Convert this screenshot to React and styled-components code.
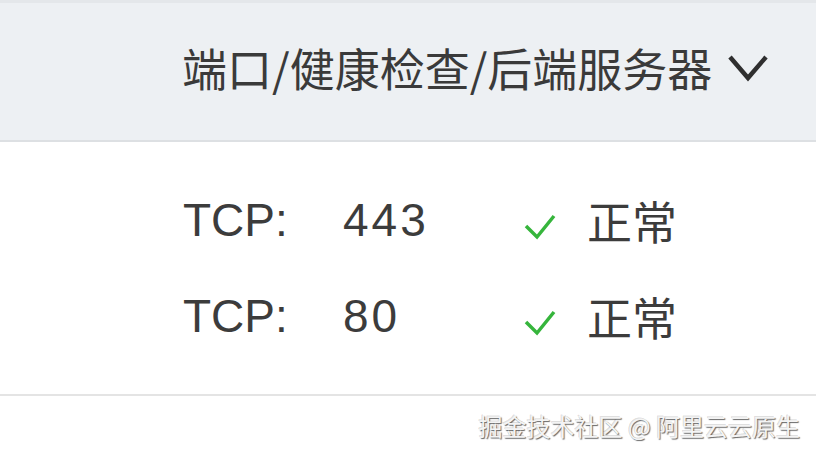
import React from 'react';
import styled, { createGlobalStyle } from 'styled-components';

const GlobalStyles = createGlobalStyle`
  html, body {
    margin: 0;
    padding: 0;
    background: #ffffff;
  }
  body {
    width: 816px;
    height: 456px;
    overflow: hidden;
    font-family: "Liberation Sans", "Noto Sans CJK SC", sans-serif;
    color: #333333;
  }
`;

const listeners = [
  { proto: 'TCP:', port: '443', status: '正常' },
  { proto: 'TCP:', port: '80', status: '正常' },
];

const App = () => (
  <>
    <GlobalStyles />
    <Page>
      <Header>
        <HeaderTitle>端口/健康检查/后端服务器</HeaderTitle>
        <Chevron viewBox="0 0 42 30">
          <path d="M3 4 L21 25 L39 4" />
        </Chevron>
      </Header>
      <Body>
        {listeners.map((item) => (
          <Row key={item.port}>
            <Cell>{item.proto}</Cell>
            <Port>{item.port}</Port>
            <Check viewBox="0 0 32 29">
              <path d="M2 14 L13 25 L30 4" />
            </Check>
            <Status>{item.status}</Status>
          </Row>
        ))}
      </Body>
      <Footer>
        <Watermark>掘金技术社区 @ 阿里云云原生</Watermark>
      </Footer>
    </Page>
  </>
);

export default App;

const Page = styled.div`
  display: flex;
  flex-direction: column;
  width: 816px;
  height: 456px;
`;

const Header = styled.div`
  display: flex;
  align-items: center;
  gap: 15px;
  height: 142px;
  padding: 0 0 8px 182px;
  box-sizing: border-box;
  background: #edf0f3;
  border-top: 3px solid #e4e7ea;
  border-bottom: 2px solid #dde0e3;
`;

const HeaderTitle = styled.span`
  font-family: "Noto Sans CJK SC", sans-serif;
  font-size: 45px;
  line-height: 1;
  color: #3a3a3a;
`;

const Chevron = styled.svg`
  width: 42px;
  height: 30px;
  fill: none;
  stroke: #2f2f2f;
  stroke-width: 4.5;
`;

const Body = styled.div`
  display: flex;
  flex-direction: column;
  padding: 30px 0 30px 183px;
  border-bottom: 2px solid #e4e4e4;
`;

const Row = styled.div`
  display: grid;
  grid-template-columns: 160px 181px 63px auto;
  align-items: center;
  height: 96px;
`;

const Cell = styled.span`
  font-size: 46px;
  line-height: 1;
  color: #3c3c3c;
`;

const Port = styled(Cell)`
  letter-spacing: 3px;
`;

const Check = styled.svg`
  width: 32px;
  height: 29px;
  margin-top: 12px;
  fill: none;
  stroke: #36b53c;
  stroke-width: 3.5;
`;

const Status = styled.span`
  font-family: "Noto Sans CJK SC", sans-serif;
  font-size: 45px;
  line-height: 1;
  color: #3c3c3c;
`;

const Footer = styled.div`
  flex: 1;
  display: flex;
  align-items: center;
  justify-content: flex-end;
  padding-right: 16px;
`;

const Watermark = styled.span`
  font-family: "Noto Sans CJK SC", sans-serif;
  font-size: 24px;
  line-height: 1;
  color: #f4f4f4;
  text-shadow: 1px 1px 1px rgba(0, 0, 0, 0.6), -1px -1px 0 rgba(0, 0, 0, 0.15);
`;
